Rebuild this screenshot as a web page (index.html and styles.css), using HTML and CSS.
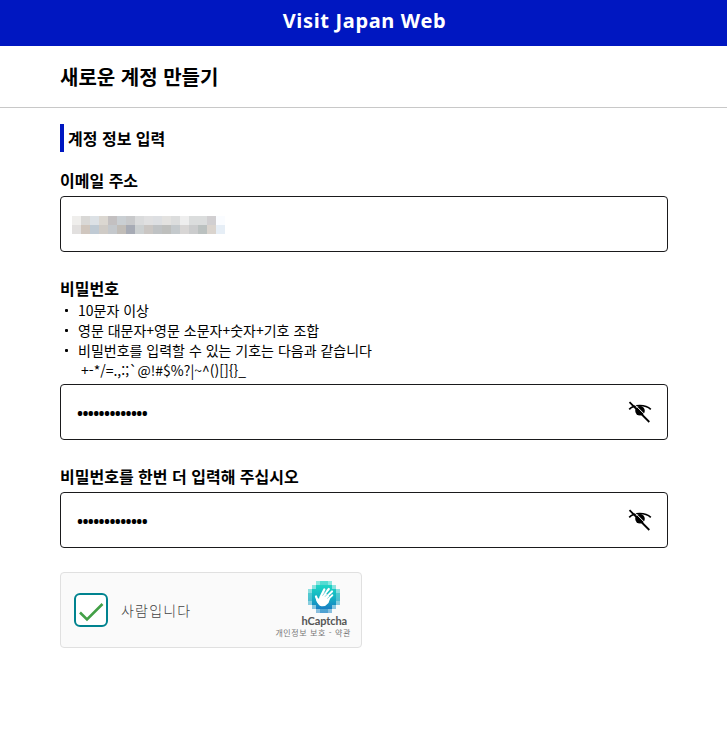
FILE: index.html
```html
<!DOCTYPE html>
<html lang="ko">
<head>
    <meta charset="UTF-8">
    <title>Visit Japan Web</title>
    <link rel="stylesheet" href="styles.css">
</head>
<body>
<header class="header">Visit Japan Web</header>
<div class="title"><h1>새로운 계정 만들기</h1></div>
<form class="main">
    <h2 class="section">계정 정보 입력</h2>

    <label class="label">이메일 주소</label>
    <div class="field email">
        <svg class="mosaic" width="153" height="24" viewBox="0 0 153 24" shape-rendering="crispEdges">
            <path fill="#efeeec" d="M0 0h9v9H0z"/><path fill="#d9d8d6" d="M9 0h9v9H9z"/><path fill="#dce1e5" d="M18 0h9v9h-9z"/>
            <path fill="#dbd7d1" d="M27 0h9v9h-9z"/><path fill="#c3c0c1" d="M36 0h9v9h-9z"/><path fill="#cacfd3" d="M45 0h9v9h-9z"/>
            <path fill="#c8c9cb" d="M54 0h9v9h-9z"/><path fill="#dadbdc" d="M63 0h9v9h-9z"/><path fill="#e0e0e1" d="M72 0h9v9h-9z"/>
            <path fill="#dddfe2" d="M81 0h9v9h-9z"/><path fill="#e3e2e0" d="M90 0h9v9h-9z"/><path fill="#dcdddd" d="M99 0h9v9h-9z"/>
            <path fill="#eeeeee" d="M108 0h9v9h-9z"/><path fill="#dbdddd" d="M117 0h18v9h-18z"/><path fill="#d1cfd1" d="M135 0h9v9h-9z"/>
            <path fill="#fafcff" d="M144 0h9v9h-9z"/>
            <path fill="#e2e0df" d="M0 9h9v9H0z"/><path fill="#d0c6bd" d="M9 9h9v9H9z"/><path fill="#bfcad3" d="M18 9h9v9h-9z"/>
            <path fill="#cfcbc6" d="M27 9h9v9h-9z"/><path fill="#c4c8cc" d="M36 9h9v9h-9z"/><path fill="#c1bdb8" d="M45 9h9v9h-9z"/>
            <path fill="#a7abb5" d="M54 9h9v9h-9z"/><path fill="#ccd0d1" d="M63 9h9v9h-9z"/><path fill="#cac6c3" d="M72 9h9v9h-9z"/>
            <path fill="#bfc2c4" d="M81 9h9v9h-9z"/><path fill="#bebfbd" d="M90 9h9v9h-9z"/><path fill="#c4c9cc" d="M99 9h9v9h-9z"/>
            <path fill="#d8d6d5" d="M108 9h9v9h-9z"/><path fill="#cbcccd" d="M117 9h9v9h-9z"/><path fill="#bbc1c0" d="M126 9h9v9h-9z"/>
            <path fill="#dad4ce" d="M135 9h9v9h-9z"/><path fill="#e6eef6" d="M144 9h9v9h-9z"/>
            <path fill="#fffefc" d="M9 18h9v6H9z"/><path fill="#fdfefd" d="M18 18h9v6h-9z"/>
        </svg>
    </div>

    <label class="label">비밀번호</label>
    <ul class="rules">
        <li>10문자 이상</li>
        <li>영문 대문자+영문 소문자+숫자+기호 조합</li>
        <li>비밀번호를 입력할 수 있는 기호는 다음과 같습니다</li>
    </ul>
    <p class="symbols">+-*/=.,:;`@!#$%?|~^()[]{}_</p>
    <div class="field">
        <span class="password">•••••••••••••</span>
        <svg class="eye" width="24" height="24" viewBox="0 0 24 24">
            <circle cx="12" cy="10.800" r="4.800"/>
            <path class="lid" d="M1.200 9.300C6 4.500 17 4 22.800 9.300"/>
            <path class="gap" d="M3.500 1.300L22 19.800"/>
            <path class="slash" d="M1.500 2.200L21.300 22"/>
        </svg>
    </div>

    <label class="label again">비밀번호를 한번 더 입력해 주십시오</label>
    <div class="field">
        <span class="password">•••••••••••••</span>
        <svg class="eye" width="24" height="24" viewBox="0 0 24 24">
            <circle cx="12" cy="10.800" r="4.800"/>
            <path class="lid" d="M1.200 9.300C6 4.500 17 4 22.800 9.300"/>
            <path class="gap" d="M3.500 1.300L22 19.800"/>
            <path class="slash" d="M1.500 2.200L21.300 22"/>
        </svg>
    </div>

    <div class="captcha">
        <div class="check">
            <svg width="30" height="30" viewBox="0 0 30 30"><path d="M4 17.500l7 7L26.500 9"/></svg>
        </div>
        <span class="human">사람입니다</span>
        <div class="brand">
            <svg class="logo" width="32" height="32" viewBox="0 0 32 32">
                <defs>
                    <linearGradient id="teal" x1="0" y1="0" x2="0" y2="1">
                        <stop offset="0" stop-color="#1fd6c5"/>
                        <stop offset=".5" stop-color="#14b3c2"/>
                        <stop offset="1" stop-color="#187fc4"/>
                    </linearGradient>
                </defs>
                <g fill="url(#teal)" shape-rendering="crispEdges">
                    <path opacity=".5" d="M8 0h16v4h4v4h4v16h-4v4h-4v4H8v-4H4v-4H0V8h4V4h4z"/>
                    <path opacity=".5" d="M12 0h8v4h4v4h4v4h4v8h-4v4h-4v4h-4v4h-8v-4H8v-4H4v-4H0v-8h4V8h4V4h4z"/>
                    <path d="M8 4h16v4h4v16h-4v4H8v-4H4V8h4z"/>
                </g>
                <path class="palm" d="M8 18.500l3.600-1.500 5.400-5.500 5.500 5-2 5.500q-3 3.800-7 3.300-3.500-.5-5.500-6.800z"/>
                <path class="finger" d="M8 15.500l2 5M12.300 16.500L16.300 8.500M14.500 15.500L20.800 8M17 17L24 10.500M19.500 18.500l4.700-4.200"/>
                <path class="crease" d="M14.500 14.700l3.700-5.200M17 15.700l5-5.500M19.300 17.500l4.200-4"/>
            </svg>
            <div class="name">hCaptcha</div>
            <div class="links">개인정보 보호 - 약관</div>
        </div>
    </div>
</form>
</body>
</html>
```

FILE: styles.css
```css
*{box-sizing: border-box;padding: 0;margin: 0;list-style: none;}
body{background: #fff;color: #000;font-family: "Noto Sans CJK KR", sans-serif;}
.header{height: 46px;background: #0017c1;color: #fff;font: bold 20px/42px "Noto Sans", sans-serif;letter-spacing: .65px;text-align: center;padding-left: 2px;}
.title{height: 62px;padding-left: 60px;border-bottom: 1px solid #c8c8c8;}
.title h1{font-size: 20px;line-height: 62px;}
.main{width: 608px;margin: 16px 0 0 60px;}
.section{height: 28px;border-left: 4px solid #0017c1;padding-left: 4px;font-size: 16px;line-height: 29px;}
.label{display: block;height: 24px;font-size: 16px;font-weight: bold;line-height: 24px;}
.section + .label{margin-top: 16px;height: 28px;}
.again{height: 28px;}
.field{display: flex;align-items: center;justify-content: space-between;height: 56px;border: 1px solid #1a1a1c;border-radius: 4px;padding: 0 15px 0 16px;margin-bottom: 24px;}
.email{padding-left: 11px;}
.mosaic{margin-top: 8px;}
.rules li{display: flex;height: 20px;font-size: 14px;line-height: 20px;}
.rules li:before{content: "";width: 3px;height: 3px;margin: 9px 10px 0 5px;border-radius: 1px;background: #000;}
.symbols{height: 24px;padding-left: 21px;font-size: 14px;line-height: 20px;}
.password{font: bold 16px/24px "Noto Sans", sans-serif;letter-spacing: -.62px;padding-top: 2px;}
.eye{fill: #000;}
.eye path{fill: none;}
.eye .lid{stroke: #000;stroke-width: 1.7;}
.eye .gap{stroke: #fff;stroke-width: 1;}
.eye .slash{stroke: #000;stroke-width: 1.8;}
.captcha{display: flex;align-items: center;width: 302px;height: 76px;padding: 0 10px 0 13px;border: 1px solid #e0e0e0;border-radius: 4px;background: #fafafa;}
.check{width: 34px;height: 34px;border: 2px solid #00838f;border-radius: 6px;background: #fff;}
.check svg{display: block;fill: none;stroke: #43a047;stroke-width: 2.6;}
.human{margin-left: 13px;color: #444;font-size: 14px;font-weight: 300;line-height: 20px;letter-spacing: 1.2px;}
.brand{display: flex;flex-direction: column;align-items: flex-end;margin-left: auto;height: 58px;}
.logo{flex: none;margin-right: 11px;}
.palm{fill: #fff;}
.finger{fill: none;stroke: #fff;stroke-width: 2.2;stroke-linecap: round;}
.crease{fill: none;stroke: #12aebd;stroke-width: .5;}
.name{margin-right: 4px;color: #555;font: bold 11px/15px Lato, sans-serif;letter-spacing: -.1px;}
.links{color: #777;font-size: 8px;line-height: 9px;letter-spacing: .6px;white-space: nowrap;}
```
